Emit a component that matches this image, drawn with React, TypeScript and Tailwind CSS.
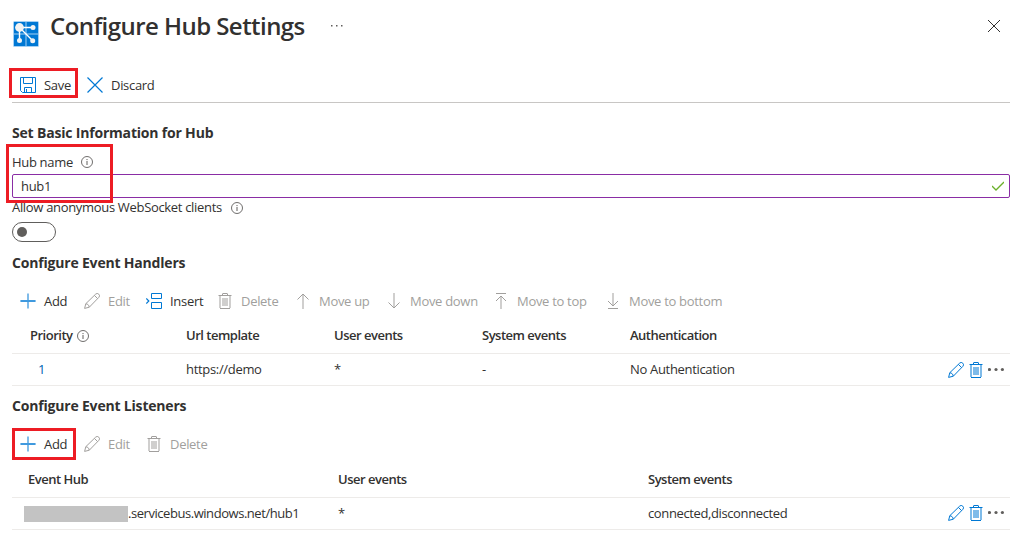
import type { ReactNode } from "react";

type IconProps = { className?: string };

function Svg({ className = "", children }: { className?: string; children: ReactNode }) {
  return (
    <svg className={`h-4 w-4 shrink-0 ${className}`} viewBox="0 0 16 16" fill="none" stroke="currentColor">
      {children}
    </svg>
  );
}

const Plus = ({ className }: IconProps) => (
  <Svg className={className}>
    <path d="M.5 8h15" />
    <path d="M.5 8h15M8 .5v15" strokeWidth="2" opacity=".5" />
  </Svg>
);
const Pencil = ({ className }: IconProps) => (
  <Svg className={className}>
    <path d="M.6 15.4l1.2-4.7L11.6 1.2a2.2 2.2 0 013.2 0a2.2 2.2 0 010 3.2L5.3 14.2zM10.4 2.4l3.2 3.2M1.8 10.8c1.9 0 3.4 1.5 3.4 3.4" />
  </Svg>
);
const Insert = ({ className }: IconProps) => (
  <Svg className={className}>
    <path d="M5.5 .5h10v5h-10zM5.5 9.5h10v6h-10z" />
    <path d="M.3 5.5l2.5 2.5-2.5 2.5" strokeWidth="1.2" />
  </Svg>
);
const Trash = ({ className }: IconProps) => (
  <Svg className={className}>
    <path d="M1.5 2.5h13M5.5 2.5v-1.5q0-.5.5-.5h4q.5 0 .5.5v1.5" />
    <path d="M3 3v12M13 3v12" strokeWidth="2" opacity=".5" />
    <path d="M3 15.5h10" />
    <path d="M5 5h6v8h-6z" fill="currentColor" stroke="none" opacity=".5" />
  </Svg>
);
const ArrowUp = ({ className }: IconProps) => (
  <Svg className={className}>
    <path d="M2.5 6.5l5.5-5.5l5.5 5.5" />
    <path d="M8 1v15" strokeWidth="2" opacity=".5" />
  </Svg>
);
const ArrowDown = ({ className }: IconProps) => (
  <Svg className={className}>
    <path d="M2.5 9.5l5.5 5.5l5.5-5.5" />
    <path d="M8 0v15" strokeWidth="2" opacity=".5" />
  </Svg>
);
const ToTop = ({ className }: IconProps) => (
  <Svg className={className}>
    <path d="M3 .5h10M3 8l5-5l5 5" />
    <path d="M8 3v13" strokeWidth="2" opacity=".5" />
  </Svg>
);
const ToBottom = ({ className }: IconProps) => (
  <Svg className={className}>
    <path d="M3 15.5h10M3 8l5 5l5-5" />
    <path d="M8 0v13" strokeWidth="2" opacity=".5" />
  </Svg>
);
const Floppy = ({ className }: IconProps) => (
  <Svg className={className}>
    <path d="M.5 .5h15v15h-13l-2-2zM3.5 .5v6h9v-6M4.5 15.5v-5h7v5M6.5 12v3.5" />
  </Svg>
);
const Cross = ({ className }: IconProps) => (
  <Svg className={className}>
    <path d="M.5 .5l15 15M15.5 .5l-15 15" strokeWidth="1.2" />
  </Svg>
);
const Info = () => (
  <svg className="h-3 w-3 shrink-0 text-[#605e5c]" viewBox="0 0 12 12" fill="none" stroke="currentColor">
    <circle cx="6" cy="6" r="5.5" strokeWidth=".9" />
    <path d="M6 5v4M6 3v1.1" />
  </svg>
);

function HubLogo() {
  return (
    <svg className="h-[26px] w-[26px] shrink-0" viewBox="0 0 26 26">
      <rect width="26" height="26" rx="1.5" fill="#a5d0f3" />
      <path d="M1 1h11.5v11.5H1zM13.5 1H25v11.5H13.5zM1 13.5h11.5V25H1zM13.5 13.5H25V25H13.5z" fill="#0078d4" />
      <path d="M6.5 6.5H20M6.5 6.5V19M6.5 6.5L19.5 19.5" stroke="#fff" strokeWidth="1.4" />
      <g fill="#f3f3f3">
        <circle cx="6.5" cy="6.5" r="4.4" />
        <circle cx="20" cy="6.5" r="2.5" />
        <circle cx="6.5" cy="19.5" r="2.5" />
        <circle cx="19.7" cy="19.7" r="2.5" />
      </g>
    </svg>
  );
}

function Tool({ icon, label, width, disabled }: { icon: ReactNode; label: string; width: string; disabled?: boolean }) {
  return (
    <button className={`flex h-6 shrink-0 items-center gap-2 whitespace-nowrap text-left ${width} ${disabled ? "text-[#a19f9d]" : "text-[#0078d4]"}`}>
      {icon}
      <span className={`tracking-[-0.3px] ${disabled ? "" : "text-[#323130]"}`}>{label}</span>
    </button>
  );
}

const Heading = ({ children }: { children: ReactNode }) => (
  <h2 className="h-5 text-[14px] leading-5 font-bold tracking-[-0.19px]">{children}</h2>
);

function RowActions({ className = "" }: IconProps) {
  return (
    <div className={`ml-auto flex items-center text-[#0078d4] ${className}`}>
      <Pencil />
      <Trash className="ml-1" />
      <svg className="ml-1 h-4 w-4 text-[#605e5c]" viewBox="0 0 16 16" fill="currentColor">
        <circle cx="1.5" cy="7.5" r="1.6" />
        <circle cx="8" cy="7.5" r="1.6" />
        <circle cx="14.4" cy="7.5" r="1.6" />
      </svg>
    </div>
  );
}

export default function App() {
  return (
    <main className="relative flex h-[544px] w-[1027px] flex-col overflow-hidden bg-white pr-[17px] pl-3 font-['Open_Sans','Noto_Sans',sans-serif] text-[13px] leading-5 tracking-[-0.32px] text-[#323130]">
      <header className="flex h-[67px] items-start pl-px">
        <div className="pt-[21px]"><HubLogo /></div>
        <h1 className="ml-[11px] w-[255px] pt-[10px] text-[24px] leading-8 font-semibold tracking-[-0.55px] whitespace-nowrap">Configure Hub Settings</h1>
        <svg className="mt-6 ml-[26px] h-1 w-3 fill-[#605e5c]" viewBox="0 0 12 4">
          <path d="M0 1h1.5v1.5H0zM5 1h1.5v1.5H5zM10 1h1.5v1.5H10z" />
        </svg>
        <svg className="mt-5 mr-[10px] ml-auto h-3 w-3 stroke-[#323130]" viewBox="0 0 12 12">
          <path d="M0 0l12 12M12 0L0 12" />
        </svg>
      </header>

      <div className="flex h-9 shrink-0 items-center border-b border-[#c8c6c4] pl-2">
        <Tool icon={<Floppy />} label="Save" width="w-[67px]" />
        <Tool icon={<Cross />} label="Discard" width="w-20" />
      </div>

      <section className="flex flex-col pt-5">
        <Heading>Set Basic Information for Hub</Heading>
        <div className="mt-2 flex h-[22px] items-center gap-2"><span>Hub name</span><Info /></div>
        <div className="mt-px flex h-6 items-center justify-between rounded-[2px] border border-[#8a2da5] pr-[5px] pl-2">
          <span>hub1</span>
          <svg className="h-3 w-3 fill-none stroke-[#6bb02b]" viewBox="0 0 12 12"><path d="M0 6l4 4l8-8" strokeWidth="1.3" /></svg>
        </div>
        <div className="-mt-px flex h-5 items-center gap-[9px]"><span>Allow anonymous WebSocket clients</span><span className="pt-px"><Info /></span></div>
        <div className="mt-[5px] flex h-5 w-11 items-center rounded-full border border-[#605e5c] pl-1">
          <span className="h-[10px] w-[10px] rounded-full bg-[#605e5c]" />
        </div>
      </section>

      <section className="flex flex-col pt-[11px]">
        <Heading>Configure Event Handlers</Heading>
        <div className="mt-4 flex h-6 items-center pl-2">
          <Tool icon={<Plus />} label="Add" width="w-16" />
          <Tool icon={<Pencil />} label="Edit" width="w-[62px]" disabled />
          <Tool icon={<Insert />} label="Insert" width="w-[71px]" />
          <Tool icon={<Trash />} label="Delete" width="w-[78px]" disabled />
          <Tool icon={<ArrowUp />} label="Move up" width="w-[91px]" disabled />
          <Tool icon={<ArrowDown />} label="Move down" width="w-[107px]" disabled />
          <Tool icon={<ToTop />} label="Move to top" width="w-[112px]" disabled />
          <Tool icon={<ToBottom />} label="Move to bottom" width="w-[130px]" disabled />
        </div>
        <div className="mt-[5px] flex h-9 items-center border-b border-[#edebe9] pb-px pl-[18px] font-semibold tracking-[-0.5px]">
          <div className="flex w-[156px] items-center gap-1"><span>Priority</span><span className="pt-0.5"><Info /></span></div>
          <div className="w-[148px]">Url template</div>
          <div className="w-[148px]">User events</div>
          <div className="w-[148px]">System events</div>
          <div>Authentication</div>
        </div>
        <div className="flex h-8 items-center border-b border-[#edebe9] pr-[6px] pb-px pl-[26px]">
          <div className="w-[148px] text-[#0065b3]">1</div>
          <div className="w-[148px]">https://demo</div>
          <div className="w-[148px]">*</div>
          <div className="w-[148px]">-</div>
          <div>No Authentication</div>
          <RowActions className="mt-0.5" />
        </div>
      </section>

      <section className="flex flex-col pt-[10px]">
        <Heading>Configure Event Listeners</Heading>
        <div className="mt-4 flex h-6 items-center pl-2">
          <Tool icon={<Plus />} label="Add" width="w-16" />
          <Tool icon={<Pencil />} label="Edit" width="w-[62px]" disabled />
          <Tool icon={<Trash />} label="Delete" width="w-[77px]" disabled />
        </div>
        <div className="mt-[5px] flex h-[37px] items-center border-b border-[#edebe9] pl-4 font-semibold tracking-[-0.5px]">
          <div className="w-[310px]">Event Hub</div>
          <div className="w-[310px]">User events</div>
          <div>System events</div>
        </div>
        <div className="flex h-8 items-center border-b border-[#edebe9] pr-[6px] pb-px pl-3">
          <div className="flex w-[314px] items-center"><span className="mt-0.5 h-4 w-[104px] bg-[#c3c3c3]" /><span className="tracking-[-0.45px]">.servicebus.windows.net/hub1</span></div>
          <div className="w-[310px]">*</div>
          <div className="tracking-[-0.38px]">connected,disconnected</div>
          <RowActions />
        </div>
      </section>

      <div className="absolute top-[68px] left-[9px] h-[30px] w-[69px] border-3 border-[#ed1c24]" />
      <div className="absolute top-[144px] left-[6px] h-[59px] w-[107px] border-3 border-[#ed1c24]" />
      <div className="absolute top-[428px] left-3 h-8 w-16 border-3 border-[#ed1c24]" />
    </main>
  );
}
